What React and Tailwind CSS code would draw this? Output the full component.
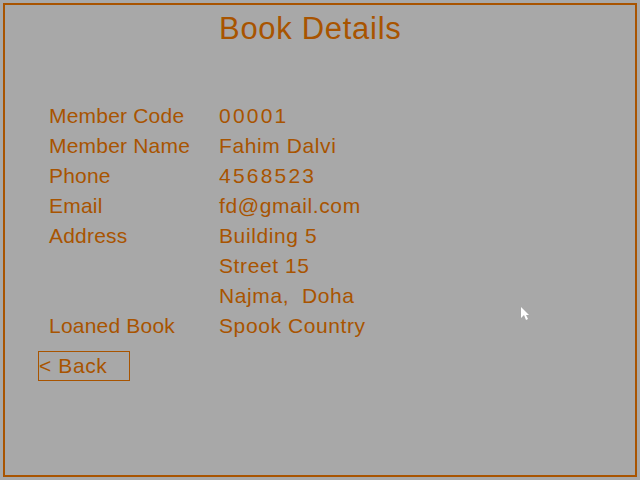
import React from "react";

const rows = [
  ["Member Code", "00001", true],
  ["Member Name", "Fahim Dalvi"],
  ["Phone", "4568523", true],
  ["Email", "fd@gmail.com"],
  ["Address", "Building 5"],
  ["", "Street 15"],
  ["", "Najma,  Doha"],
  ["Loaned Book", "Spook Country"],
];

function DetailRow({ label, value, numeric }) {
  return (
    <div className="flex h-[30px] items-center leading-[30px]">
      <span className="w-[170px] shrink-0 tracking-[0.2px]">{label}</span>
      <span className={numeric ? "whitespace-pre tracking-[2.2px]" : "whitespace-pre tracking-[0.6px]"}>
        {value}
      </span>
    </div>
  );
}

export default function App() {
  return (
    <div className="relative h-[480px] w-[640px] overflow-hidden bg-[#a8a8a8] p-[3px] font-['Liberation_Sans',Arial,sans-serif] text-[#a85400]">
      <div className="h-full w-full border-2 border-[#a85400]">
        <h1 className="pl-[214px] pt-[6px] text-[31px] leading-[36px] tracking-[0.7px]">
          Book Details
        </h1>
        <div className="mt-[54px] pl-[44px] text-[21px]">
          {rows.map(([label, value, numeric], i) => (
            <DetailRow key={i} label={label} value={value} numeric={numeric} />
          ))}
        </div>
        <button
          type="button"
          className="ml-[33px] mt-[10px] h-[30px] w-[92px] border border-[#a85400] text-left text-[21px] leading-[28px] tracking-[0.6px]"
        >
          &lt; Back
        </button>
      </div>
      {/* mouse pointer */}
      <svg className="absolute left-[521px] top-[307px]" width="10" height="16" viewBox="0 0 10 16">
        <polygon points="0,0 0,11 3,8 5,13 7,12 5,8 8,8" fill="#ffffff" />
      </svg>
    </div>
  );
}
